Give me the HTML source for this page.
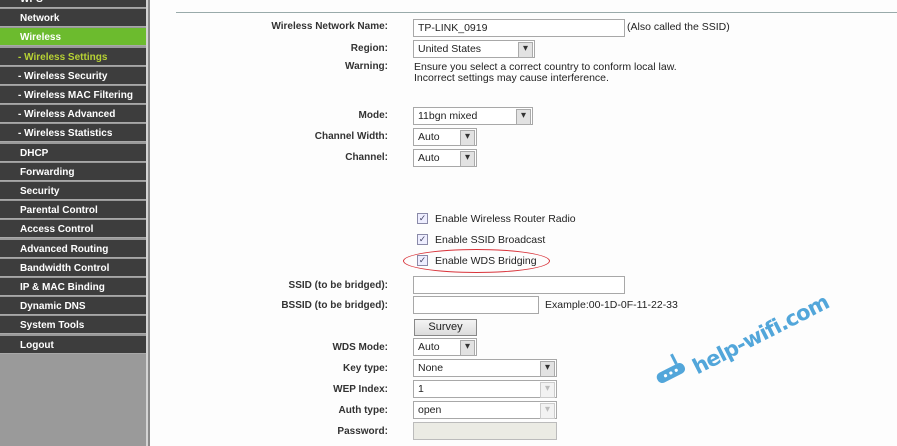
<!DOCTYPE html>
<html><head><meta charset="utf-8"><style>
*{margin:0;padding:0;box-sizing:border-box}
body{width:897px;height:446px;overflow:hidden;background:#fdfdfd;position:relative;font-family:"Liberation Sans",Arial,sans-serif;font-size:10.5px;color:#222}
#sb{position:absolute;left:0;top:0;width:146px;height:446px;background:#9a9a9a}
#bar1{position:absolute;left:146px;top:0;width:2px;height:446px;background:#d4d4d4}
#bar2{position:absolute;left:148px;top:0;width:2px;height:446px;background:#8a8a8a}
.m{position:absolute;left:0;width:146px;height:18px;background:#3d3d3d;color:#fff;font-weight:bold;font-size:10px;line-height:19px;padding-left:20px;border-bottom:1px solid #a8a8a8}
.m.s{padding-left:18px}
.m.g{background:#6cbb2e}
.m.y{color:#b7d234}
.l{position:absolute;right:509px;font-weight:bold;font-size:10px;color:#333;text-align:right;white-space:nowrap}
.i{position:absolute;left:413px;height:18px;border:1px solid #a8a8a8;background:#fff;font-size:10.5px;line-height:17px;padding-left:4px;color:#222}
.sel:after{content:"▾";position:absolute;right:1px;top:1px;width:13px;height:14px;background:#e2e2e2;border:1px solid #aaa;font-size:10px;line-height:12px;text-align:center;color:#333}
.dis:after{color:#bbb;background:#f2f2f2;border-color:#ccc}
.t{position:absolute;font-size:10.5px;color:#222;white-space:nowrap}
.cb{position:absolute;left:417px;width:11px;height:11px;border:1px solid #8a8aa8;background:#eef;font-size:9px;line-height:9px;text-align:center;color:#446}
</style></head><body>
<div id="sb">
<div class="m" style="top:-10px">WPS</div>
<div class="m" style="top:9px">Network</div>
<div class="m g" style="top:28px">Wireless</div>
<div class="m s y" style="top:48px">- Wireless Settings</div>
<div class="m s" style="top:67px">- Wireless Security</div>
<div class="m s" style="top:86px">- Wireless MAC Filtering</div>
<div class="m s" style="top:105px">- Wireless Advanced</div>
<div class="m s" style="top:124px">- Wireless Statistics</div>
<div class="m" style="top:144px">DHCP</div>
<div class="m" style="top:163px">Forwarding</div>
<div class="m" style="top:182px">Security</div>
<div class="m" style="top:201px">Parental Control</div>
<div class="m" style="top:220px">Access Control</div>
<div class="m" style="top:240px">Advanced Routing</div>
<div class="m" style="top:259px">Bandwidth Control</div>
<div class="m" style="top:278px">IP &amp; MAC Binding</div>
<div class="m" style="top:297px">Dynamic DNS</div>
<div class="m" style="top:316px">System Tools</div>
<div class="m" style="top:336px">Logout</div>
</div>
<div id="bar1"></div><div id="bar2"></div>
<div style="position:absolute;left:176px;top:12px;width:721px;height:1px;background:#9aa"></div>

<div class="l" style="top:21px">Wireless Network Name:</div>
<div class="i" style="top:19px;width:212px">TP-LINK_0919</div>
<div class="t" style="left:627px;top:21px">(Also called the SSID)</div>
<div class="l" style="top:43px">Region:</div>
<div class="i sel" style="top:40px;width:122px">United States</div>
<div class="l" style="top:61px">Warning:</div>
<div class="t" style="left:414px;top:61px">Ensure you select a correct country to conform local law.</div>
<div class="t" style="left:414px;top:72px">Incorrect settings may cause interference.</div>
<div class="l" style="top:110px">Mode:</div>
<div class="i sel" style="top:107px;width:120px">11bgn mixed</div>
<div class="l" style="top:131px">Channel Width:</div>
<div class="i sel" style="top:128px;width:64px">Auto</div>
<div class="l" style="top:152px">Channel:</div>
<div class="i sel" style="top:149px;width:64px">Auto</div>

<div class="cb" style="top:213px">✓</div><div class="t" style="left:435px;top:213px">Enable Wireless Router Radio</div>
<div class="cb" style="top:234px">✓</div><div class="t" style="left:435px;top:234px">Enable SSID Broadcast</div>
<div class="cb" style="top:255px">✓</div><div class="t" style="left:435px;top:255px">Enable WDS Bridging</div>
<div style="position:absolute;left:403px;top:249px;width:147px;height:24px;border:1.5px solid #d9333a;border-radius:50%"></div>

<div class="l" style="top:280px">SSID (to be bridged):</div>
<div class="i" style="top:276px;width:212px"></div>
<div class="l" style="top:300px">BSSID (to be bridged):</div>
<div class="i" style="top:296px;width:126px"></div>
<div class="t" style="left:545px;top:299px">Example:00-1D-0F-11-22-33</div>
<div style="position:absolute;left:414px;top:319px;width:63px;height:17px;border:1px solid #888;background:linear-gradient(#f4f4f4,#dcdcdc);font-size:11px;text-align:center;line-height:15px">Survey</div>
<div class="l" style="top:342px">WDS Mode:</div>
<div class="i sel" style="top:338px;width:64px">Auto</div>
<div class="l" style="top:363px">Key type:</div>
<div class="i sel" style="top:359px;width:144px">None</div>
<div class="l" style="top:384px">WEP Index:</div>
<div class="i sel dis" style="top:380px;width:144px">1</div>
<div class="l" style="top:405px">Auth type:</div>
<div class="i sel dis" style="top:401px;width:144px">open</div>
<div class="l" style="top:426px">Password:</div>
<div class="i" style="top:422px;width:144px;background:#ebebe4;border-color:#bbb"></div>

<div style="position:absolute;left:700px;top:354px;transform:rotate(-27deg);transform-origin:left bottom;color:#52a6da;font-size:21px;font-family:'DejaVu Sans',sans-serif;font-weight:bold;white-space:nowrap;letter-spacing:-0.8px;line-height:26px">help-wifi.com</div>
<svg style="position:absolute;left:652px;top:345px" width="42" height="40" viewBox="0 0 42 40">
<g transform="rotate(-27 20 28)"><rect x="4" y="22" width="30" height="11" rx="5" fill="#52a6da"/><line x1="28" y1="22" x2="28" y2="11" stroke="#52a6da" stroke-width="3"/><circle cx="13" cy="27.5" r="1.6" fill="#fff"/><circle cx="19" cy="27.5" r="1.6" fill="#fff"/><circle cx="25" cy="27.5" r="1.6" fill="#fff"/></g>
</svg>
</body></html>
